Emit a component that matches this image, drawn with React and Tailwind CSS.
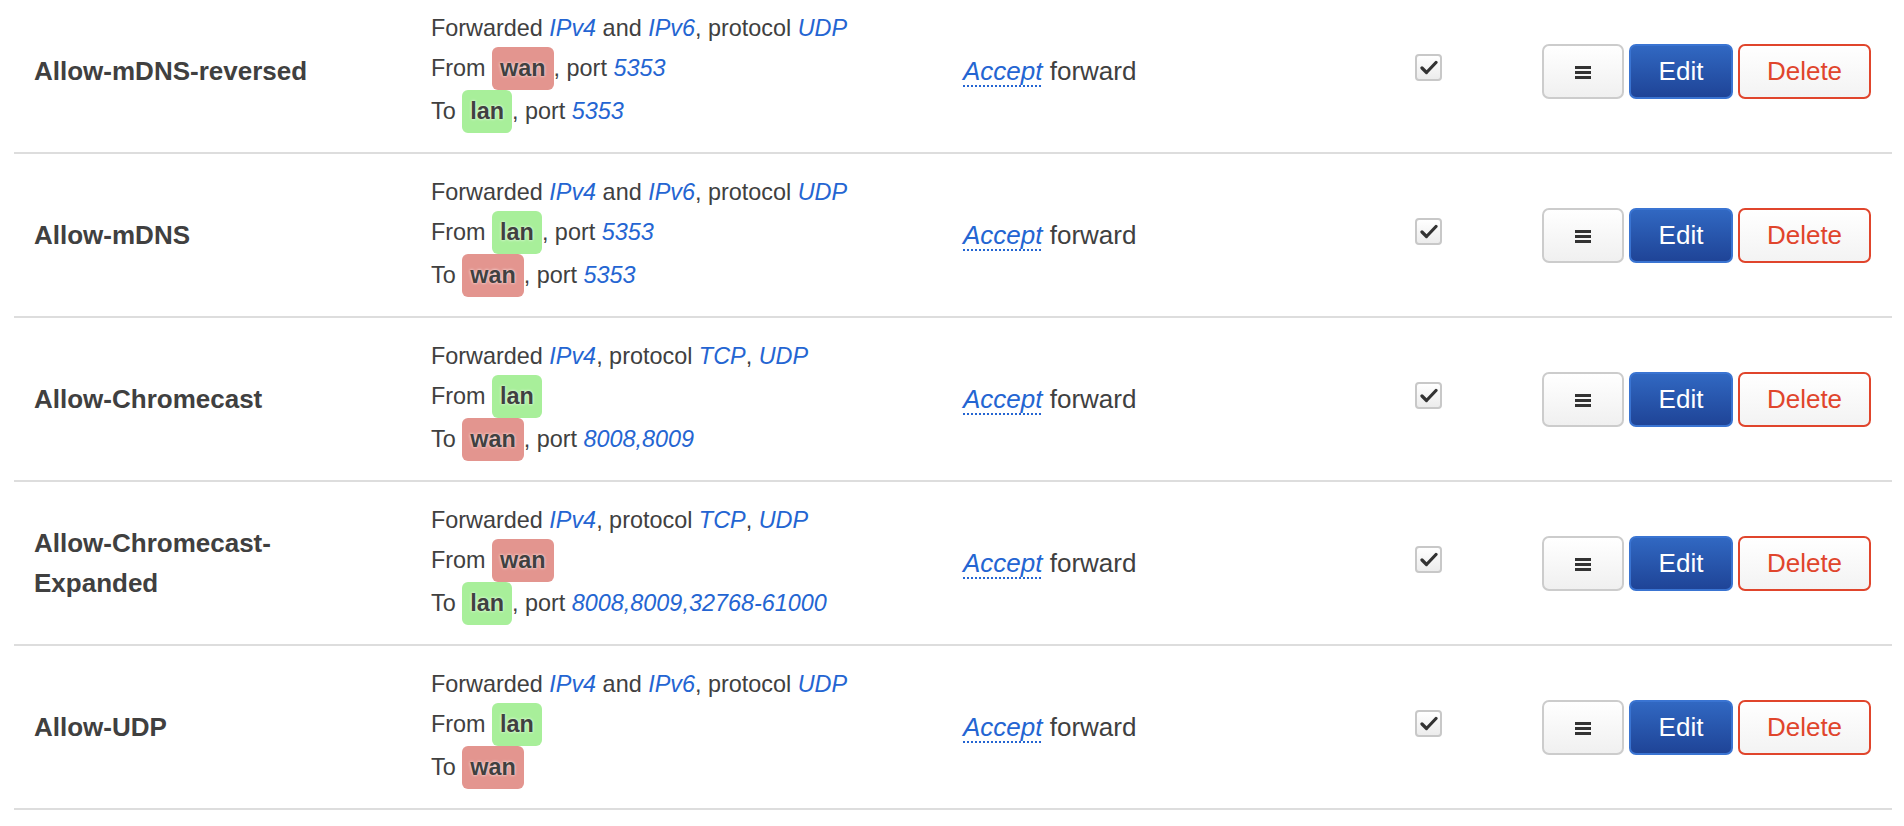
import React from "react";

const rules = [
    {
        name: "Allow-mDNS-reversed",
        family: ["IPv4", "IPv6"],
        proto: ["UDP"],
        from: { zone: "wan", port: "5353" },
        to: { zone: "lan", port: "5353" },
    },
    {
        name: "Allow-mDNS",
        family: ["IPv4", "IPv6"],
        proto: ["UDP"],
        from: { zone: "lan", port: "5353" },
        to: { zone: "wan", port: "5353" },
    },
    {
        name: "Allow-Chromecast",
        family: ["IPv4"],
        proto: ["TCP", "UDP"],
        from: { zone: "lan" },
        to: { zone: "wan", port: "8008,8009" },
    },
    {
        name: "Allow-Chromecast-Expanded",
        family: ["IPv4"],
        proto: ["TCP", "UDP"],
        from: { zone: "wan" },
        to: { zone: "lan", port: "8008,8009,32768-61000" },
    },
    {
        name: "Allow-UDP",
        family: ["IPv4", "IPv6"],
        proto: ["UDP"],
        from: { zone: "lan" },
        to: { zone: "wan" },
    },
];

const Val = ({ children }) => <em className="italic text-[#2465d2]">{children}</em>;

function ZoneBadge({ zone }) {
    const color = zone === "wan" ? "bg-[#e3958f]" : "bg-[#a8ef9a]";
    return (
        <span
            className={`${color} inline-block px-[8px] rounded-[6px] font-bold leading-[43px] [text-shadow:0_0_3px_#fff]`}
        >
            {zone}
        </span>
    );
}

function Endpoint({ label, ep }) {
    return (
        <div className="leading-[43px] whitespace-nowrap">
            {label} <ZoneBadge zone={ep.zone} />
            {ep.port && (
                <>
                    , port <Val>{ep.port}</Val>
                </>
            )}
        </div>
    );
}

function MenuIcon() {
    return (
        <svg width="16" height="13" viewBox="0 0 16 13" fill="#333">
            <rect x="0" y="0" width="16" height="3" />
            <rect x="0" y="5" width="16" height="3" />
            <rect x="0" y="10" width="16" height="3" />
        </svg>
    );
}

function Row({ rule }) {
    return (
        <div className="grid grid-cols-[397px_532px_452px_147px_1fr] h-[164px] border-b-2 border-[#dddddd] items-center">
            <div className="pl-[20px] pr-[60px] font-bold text-[26px] leading-[40px]">{rule.name}</div>

            <div className="pl-[20px] text-[23.4px]">
                <div className="leading-[38px] whitespace-nowrap">
                    Forwarded{" "}
                    {rule.family.map((f, i) => (
                        <React.Fragment key={f}>
                            {i > 0 && " and "}
                            <Val>{f}</Val>
                        </React.Fragment>
                    ))}
                    , protocol{" "}
                    {rule.proto.map((p, i) => (
                        <React.Fragment key={p}>
                            {i > 0 && ", "}
                            <Val>{p}</Val>
                        </React.Fragment>
                    ))}
                </div>
                <Endpoint label="From" ep={rule.from} />
                <Endpoint label="To" ep={rule.to} />
            </div>

            <div className="pl-[20px] text-[26px]">
                <span className="italic text-[#2465d2] underline decoration-dotted decoration-2 underline-offset-[6px]">
                    Accept
                </span>{" "}
                forward
            </div>

            <div className="pl-[20px] mb-[8px]">
                <div className="w-[27px] h-[27px] border-2 border-[#c8c8c8] rounded-[4px] bg-gradient-to-b from-white to-[#ececec] flex items-center justify-center">
                    <svg width="18" height="15" viewBox="0 0 18 15">
                        <path d="M2 8 L6.5 12.5 L16 2.5" fill="none" stroke="#333" strokeWidth="3.2" strokeLinecap="round" strokeLinejoin="round" />
                    </svg>
                </div>
            </div>

            <div className="flex justify-end gap-[5px] pr-[22px]">
                <button className="w-[82px] h-[55px] border-2 border-[#cccccc] rounded-[7px] bg-gradient-to-b from-white to-[#f0f0f0] flex items-center justify-center pt-[2px]">
                    <MenuIcon />
                </button>
                <button className="w-[104px] h-[55px] border-2 border-[#3a74d2] rounded-[7px] bg-gradient-to-b from-[#3168c2] to-[#1f4497] text-white text-[26px]">
                    Edit
                </button>
                <button className="w-[133px] h-[55px] border-2 border-[#e0452c] rounded-[7px] bg-gradient-to-b from-white to-[#f3f3f3] text-[#e0452c] text-[26px]">
                    Delete
                </button>
            </div>
        </div>
    );
}

export default function App() {
    return (
        <div className="h-[826px] overflow-hidden bg-white text-[#404040] font-['Liberation_Sans',Arial,sans-serif]">
            <div className="ml-[14px] mr-[12px] mt-[-10px]">
                {rules.map((rule) => (
                    <Row key={rule.name} rule={rule} />
                ))}
            </div>
        </div>
    );
}
